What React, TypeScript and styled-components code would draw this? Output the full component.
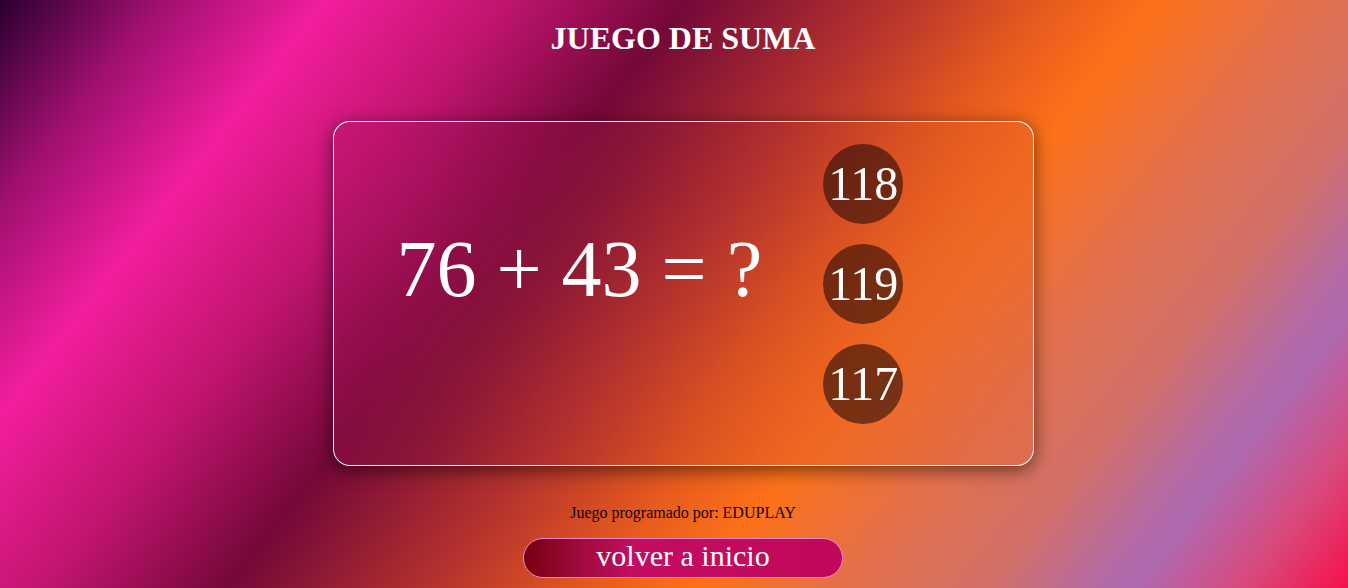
import React from "react";
import styled, { createGlobalStyle } from "styled-components";

const GlobalStyle = createGlobalStyle`
  html, body {
    margin: 0;
    padding: 0;
    height: 100%;
    overflow: hidden;
  }
  body {
    font-family: "Liberation Serif", "Times New Roman", serif;
    background: linear-gradient(
      128deg,
      #2a0030 0%,
      #a01070 9%,
      #f21e9c 18%,
      #c0156e 28%,
      #740838 38%,
      #b8352c 50%,
      #e65a1e 58%,
      #fd7119 64%,
      #e4704a 72%,
      #d27068 80%,
      #b46aa4 86%,
      #ae6ab2 88%,
      #d84a7c 94%,
      #f6104a 100%
    );
  }
`;

const Page = styled.div`
  display: flex;
  flex-direction: column;
  align-items: center;
  padding-left: 18px;
  height: 588px;
  box-sizing: border-box;
`;

const Title = styled.h1`
  margin: 20px 0 0;
  font-size: 32px;
  line-height: 37px;
  font-weight: bold;
  color: #ffffff;
`;

const Card = styled.section`
  margin-top: 64px;
  width: 701px;
  height: 345px;
  box-sizing: border-box;
  border: 1px solid rgba(255, 255, 255, 0.95);
  border-radius: 17px;
  background: linear-gradient(
    125deg,
    rgba(190, 20, 110, 0.35) 0%,
    rgba(140, 20, 60, 0.25) 35%,
    rgba(200, 70, 40, 0.2) 60%,
    rgba(225, 105, 65, 0.3) 100%
  );
  backdrop-filter: blur(40px);
  box-shadow: 0 4px 18px rgba(0, 0, 0, 0.55);
  display: flex;
  flex-direction: row;
  align-items: flex-start;
  padding-left: 63px;
`;

const Equation = styled.div`
  margin-top: 103px;
  font-size: 80px;
  line-height: 88px;
  color: #ffffff;
  white-space: pre;
`;

const Options = styled.div`
  margin-left: 61px;
  padding-top: 22px;
  display: flex;
  flex-direction: column;
  gap: 20px;
`;

const Option = styled.button`
  width: 80px;
  height: 80px;
  padding: 0;
  border: none;
  border-radius: 50%;
  background: rgba(40, 12, 6, 0.6);
  color: #ffffff;
  font-family: "Liberation Serif", "Times New Roman", serif;
  font-size: 48px;
  line-height: 1;
  display: flex;
  align-items: center;
  justify-content: center;
  cursor: pointer;
`;

const Credit = styled.p`
  margin: 38px 0 0;
  font-size: 16px;
  line-height: 18px;
  color: #140608;
`;

const BackButton = styled.button`
  margin-top: 16px;
  width: 320px;
  height: 40px;
  box-sizing: border-box;
  padding: 0 0 4px;
  border: 1px solid #f184cc;
  border-radius: 20px;
  background: linear-gradient(90deg, #760010 0%, #a00a40 18%, #c40d62 34%, #c0085a 100%);
  color: #ffffff;
  font-family: "Liberation Serif", "Times New Roman", serif;
  font-size: 30px;
  line-height: 34px;
  cursor: pointer;
`;

const options = [118, 119, 117];

export default function App() {
  return (
    <>
      <GlobalStyle />
      <Page>
        <Title>JUEGO DE SUMA</Title>
        <Card>
          <Equation>76 + 43 = ?</Equation>
          <Options>
            {options.map((n) => (
              <Option key={n}>{n}</Option>
            ))}
          </Options>
        </Card>
        <Credit>Juego programado por: EDUPLAY</Credit>
        <BackButton>volver a inicio</BackButton>
      </Page>
    </>
  );
}
